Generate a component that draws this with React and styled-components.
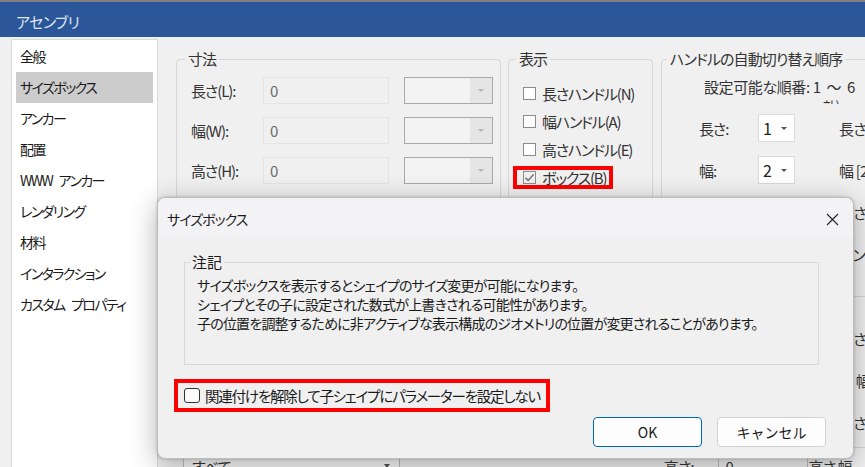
import styled, { createGlobalStyle } from 'styled-components'

const GlobalStyle = createGlobalStyle`
  html, body {
    margin: 0;
    padding: 0;
    background: #f0f0f0;
  }
  body {
    font-family: "Noto Sans CJK JP", "Noto Sans", sans-serif;
    font-feature-settings: "palt";
    overflow: hidden;
  }
`

const Window = styled.div`
  position: relative;
  width: 865px;
  height: 467px;
  overflow: hidden;
  box-sizing: border-box;
  background: #f0f0f0;
  border-top: 2px solid #7f7f7f;
  display: flex;
  flex-direction: column;
`
const TitleBar = styled.div`
  flex: none;
  height: 35px;
  box-sizing: border-box;
  padding: 4px 0 0 16px;
  background: #2b579a;
  color: #dfe5ef;
  font-size: 15px;
  letter-spacing: -0.6px;
  display: flex;
  align-items: center;
`
const Body = styled.div`
  flex: 1;
  min-height: 0;
  display: flex;
  padding: 2px 0 0 11px;
`
const Sidebar = styled.div`
  flex: none;
  width: 147px;
  box-sizing: border-box;
  background: #ffffff;
  border: 1px solid #dadada;
  border-bottom: none;
  padding: 1px 4px;
`
const SideItem = styled.div`
  height: 31px;
  line-height: 31px;
  padding-left: 4px;
  font-size: 14px;
  letter-spacing: -1.6px;
  word-spacing: 5px;
  color: #1a1a1a;
  white-space: nowrap;
  background: ${(p) => (p.selected ? '#cccccc' : 'transparent')};
`
const Content = styled.div`
  flex: 1;
  min-width: 0;
  display: flex;
  flex-direction: column;
  gap: 4px;
  padding: 11px 0 0 18px;
`
const TopRow = styled.div`
  display: flex;
  align-items: flex-start;
  gap: 7px;
`
const Group = styled.fieldset`
  flex: none;
  margin: 0 0 0 ${(p) => p.ml || 0}px;
  min-width: 0;
  box-sizing: border-box;
  width: ${(p) => p.w}px;
  height: ${(p) => p.h}px;
  border: 1px solid #d6d6d6;
  border-radius: 4px;
  padding: ${(p) => p.pad};
`
const Legend = styled.legend`
  font-size: 15px;
  line-height: 18px;
  letter-spacing: -0.9px;
  color: #333;
  padding: 0 3px;
  margin-left: ${(p) => p.ml || 0}px;
  white-space: nowrap;
`
const DimGrid = styled.div`
  display: grid;
  grid-template-columns: 57px 126px 89px;
  column-gap: 15px;
  row-gap: 13px;
  align-items: center;
`
const FieldLabel = styled.div`
  font-size: 15px;
  letter-spacing: -1.1px;
  color: #333;
  white-space: nowrap;
`
const DisabledInput = styled.div`
  height: 27px;
  box-sizing: border-box;
  border: 1px solid #e4e4e4;
  background: #f0f0f0;
  color: #6d6d6d;
  font-size: 15px;
  line-height: 25px;
  padding-left: 6px;
`
const Combo = styled.div`
  height: 27px;
  box-sizing: border-box;
  border: 1px solid #a9a9a9;
  background: #f3f3f3;
  display: flex;
  justify-content: flex-end;
`
const ComboArrow = styled.div`
  width: 22px;
  background: #e5e5e5;
  display: flex;
  align-items: center;
  justify-content: center;
  &::after {
    content: '';
    border-left: 3px solid transparent;
    border-right: 3px solid transparent;
    border-top: 3px solid #b4b4b4;
  }
`
const CheckList = styled.div`
  display: flex;
  flex-direction: column;
`
const CheckRow = styled.div`
  height: 28px;
  display: flex;
  align-items: center;
`
const CheckItem = styled.div`
  display: inline-flex;
  align-items: center;
  height: 15px;
  padding: 0 3px 0 6px;
  outline: ${(p) => (p.marked ? '4px solid #ff0000' : 'none')};
  font-size: 15px;
  letter-spacing: -1.2px;
  color: #333;
  white-space: nowrap;
`
const Box = styled.span`
  flex: none;
  width: 13px;
  height: 13px;
  box-sizing: border-box;
  border: 1px solid #8c8c8c;
  background: ${(p) => (p.checked ? '#f0f0f0' : '#ffffff')};
  margin-right: 6px;
  display: flex;
  align-items: center;
  justify-content: center;
`
const RangeText = styled.div`
  margin: 9px 0 0 37px;
  height: 27px;
  overflow: hidden;
  font-size: 15px;
  line-height: 20px;
  letter-spacing: -0.4px;
  color: #333;
  white-space: nowrap;
`
const RangeSecond = styled.div`
  padding-left: 119px;
  font-size: 13px;
  line-height: 18px;
`
const OrderGrid = styled.div`
  margin: 10px 0 0 32px;
  display: grid;
  grid-template-columns: 59px 37px 90px;
  column-gap: 0;
  row-gap: 14px;
  grid-auto-rows: 28px;
  align-items: center;
`
const OrderSelect = styled.div`
  height: 28px;
  box-sizing: border-box;
  border: 1px solid #dadada;
  background: #ffffff;
  display: flex;
  align-items: center;
  gap: 9px;
  padding-left: 4px;
  font-size: 16px;
  color: #222;
  &::after {
    content: '';
    border-left: 3px solid transparent;
    border-right: 3px solid transparent;
    border-top: 3px solid #555;
  }
`
const FarText = styled.div`
  grid-column: 3;
  padding-left: 44px;
  font-size: 15px;
  letter-spacing: -0.8px;
  color: #333;
  white-space: nowrap;
`
const FarRule = styled.div`
  grid-column: 3;
  margin-left: 44px;
  height: 1px;
  background: #d6d6d6;
`
const BottomRow = styled.div`
  display: flex;
  align-items: flex-start;
  font-size: 15px;
  letter-spacing: -0.8px;
  color: #333;
`
const WideCombo = styled.div`
  margin-left: 7px;
  width: 229px;
  height: 24px;
  box-sizing: border-box;
  border: 1px solid #bcbcbc;
  background: #f7f7f7;
  display: flex;
  align-items: center;
  justify-content: space-between;
  padding: 4px 9px 0 8px;
  &::after {
    content: '';
    border-left: 3px solid transparent;
    border-right: 3px solid transparent;
    border-top: 4px solid #555;
  }
`
const Cell = styled.div`
  margin-left: ${(p) => p.ml}px;
  width: ${(p) => p.w}px;
  height: 24px;
  padding: 4px 0 0 ${(p) => p.pl || 0}px;
  border-left: ${(p) => (p.line ? '1px solid #bcbcbc' : 'none')};
  white-space: nowrap;
`

const Dialog = styled.div`
  position: absolute;
  left: 157px;
  top: 195px;
  width: 697px;
  height: 262px;
  box-sizing: border-box;
  border: 1px solid #bdbdbd;
  border-radius: 8px;
  background: #f0f0f0;
  overflow: hidden;
  box-shadow: 0 6px 28px rgba(0, 0, 0, 0.3), 0 0 3px rgba(0, 0, 0, 0.2);
  display: flex;
  flex-direction: column;
`
const DialogTitle = styled.div`
  flex: none;
  height: 38px;
  background: #f3f3f6;
  display: flex;
  align-items: center;
  justify-content: space-between;
  padding: 2px 14px 0 9px;
  font-size: 14px;
  letter-spacing: -1px;
  color: #1b1b1b;
`
const DialogBody = styled.div`
  display: flex;
  flex-direction: column;
  padding: 15px 27px 0 26px;
`
const NoteGroup = styled.fieldset`
  margin: 0 7px 0 0;
  min-width: 0;
  box-sizing: border-box;
  height: 112px;
  border: 1px solid #d9d9d9;
  padding: 5px 12px 0 12px;
`
const NoteLegend = styled.legend`
  font-size: 15px;
  line-height: 18px;
  color: #1a1a1a;
  padding: 0 2px;
  margin-left: -7px;
`
const NoteText = styled.p`
  margin: 0;
  font-size: 14px;
  line-height: 19px;
  letter-spacing: -0.8px;
  color: #1a1a1a;
  white-space: nowrap;
`
const MarkedOption = styled.label`
  align-self: flex-start;
  margin: 14px 0 0 -10px;
  height: 33px;
  box-sizing: border-box;
  border: 4px solid #ff0000;
  padding: 0 6px;
  display: inline-flex;
  align-items: center;
  font-size: 14.5px;
  letter-spacing: -1.2px;
  color: #1a1a1a;
  white-space: nowrap;
`
const RoundBox = styled.span`
  width: 16px;
  height: 15px;
  box-sizing: border-box;
  border: 1px solid #333;
  border-radius: 3px;
  background: #fbfbfb;
  margin-right: 5px;
`
const ButtonRow = styled.div`
  margin-top: 5px;
  display: flex;
  justify-content: flex-end;
  gap: 15px;
`
const Button = styled.button`
  width: 109px;
  height: 30px;
  box-sizing: border-box;
  border-radius: 4px;
  border: 1px solid ${(p) => (p.primary ? '#0067c0' : '#d1d1d1')};
  background: #fdfdfd;
  font-family: inherit;
  font-size: 14px;
  color: #1a1a1a;
  padding: 0;
`

const sideItems = [
  '全般',
  'サイズボックス',
  'アンカー',
  '配置',
  'WWW アンカー',
  'レンダリング',
  '材料',
  'インタラクション',
  'カスタム プロパティ',
]

const dims = ['長さ(L):', '幅(W):', '高さ(H):']

const checks = [
  { label: '長さハンドル(N)' },
  { label: '幅ハンドル(A)' },
  { label: '高さハンドル(E)' },
  { label: 'ボックス(B)', checked: true, marked: true },
]

function CheckMark() {
  return (
    <svg width="11" height="11" viewBox="0 0 11 11">
      <path d="M1.5 5.8 L4.2 8.4 L9.6 2.4" fill="none" stroke="#6a6a6a" strokeWidth="1.4" />
    </svg>
  )
}

function CloseIcon() {
  return (
    <svg width="13" height="13" viewBox="0 0 13 13">
      <path d="M1 1 L12 12 M12 1 L1 12" stroke="#222" strokeWidth="1.1" />
    </svg>
  )
}

function App() {
  return (
    <Window>
      <GlobalStyle />
      <TitleBar>アセンブリ</TitleBar>
      <Body>
        <Sidebar>
          {sideItems.map((s, i) => (
            <SideItem key={s} selected={i === 1}>
              {s}
            </SideItem>
          ))}
        </Sidebar>
        <Content>
          <TopRow>
            <Group w={325} h={150} pad="9px 0 0 14px">
              <Legend ml={-6}>寸法</Legend>
              <DimGrid>
                {dims.map((d) => (
                  <>
                    <FieldLabel key={d}>{d}</FieldLabel>
                    <DisabledInput>0</DisabledInput>
                    <Combo>
                      <ComboArrow />
                    </Combo>
                  </>
                ))}
              </DimGrid>
            </Group>
            <Group w={145} h={150} pad="11px 0 0 8px">
              <Legend ml={-1}>表示</Legend>
              <CheckList>
                {checks.map((c) => (
                  <CheckRow key={c.label}>
                    <CheckItem marked={c.marked}>
                      <Box checked={c.checked}>{c.checked && <CheckMark />}</Box>
                      {c.label}
                    </CheckItem>
                  </CheckRow>
                ))}
              </CheckList>
            </Group>
            <Group w={240} h={398} ml={1} pad="0 0 0 5px">
              <Legend>ハンドルの自動切り替え順序</Legend>
              <RangeText>
                設定可能な順番: 1&nbsp;&nbsp;～&nbsp;&nbsp;6
                <RangeSecond>効)</RangeSecond>
              </RangeText>
              <OrderGrid>
                <FieldLabel>長さ:</FieldLabel>
                <OrderSelect>1</OrderSelect>
                <FarText>長さ [</FarText>
                <FieldLabel>幅:</FieldLabel>
                <OrderSelect>2</OrderSelect>
                <FarText>幅 [2</FarText>
                <FarText>高さ [</FarText>
                <FarText>ハンド'1</FarText>
                <FarRule />
                <FarText>長さ三(</FarText>
                <FarText>幅 幅|</FarText>
                <FarText>高さ[]:</FarText>
              </OrderGrid>
            </Group>
          </TopRow>
          <BottomRow>
            <WideCombo>すべて</WideCombo>
            <Cell ml={264} w={58}>高さ:</Cell>
            <Cell ml={0} w={69} pl={6} line>0</Cell>
            <Cell ml={17} w={60} line>高さ 幅</Cell>
          </BottomRow>
        </Content>
      </Body>

      <Dialog>
        <DialogTitle>
          サイズボックス
          <CloseIcon />
        </DialogTitle>
        <DialogBody>
          <NoteGroup>
            <NoteLegend>注記</NoteLegend>
            <NoteText>サイズボックスを表示するとシェイプのサイズ変更が可能になります。</NoteText>
            <NoteText>シェイプとその子に設定された数式が上書きされる可能性があります。</NoteText>
            <NoteText>
              子の位置を調整するために非アクティブな表示構成のジオメトリの位置が変更されることがあります。
            </NoteText>
          </NoteGroup>
          <MarkedOption>
            <RoundBox />
            関連付けを解除して子シェイプにパラメーターを設定しない
          </MarkedOption>
          <ButtonRow>
            <Button primary>OK</Button>
            <Button>キャンセル</Button>
          </ButtonRow>
        </DialogBody>
      </Dialog>
    </Window>
  )
}

export default App
